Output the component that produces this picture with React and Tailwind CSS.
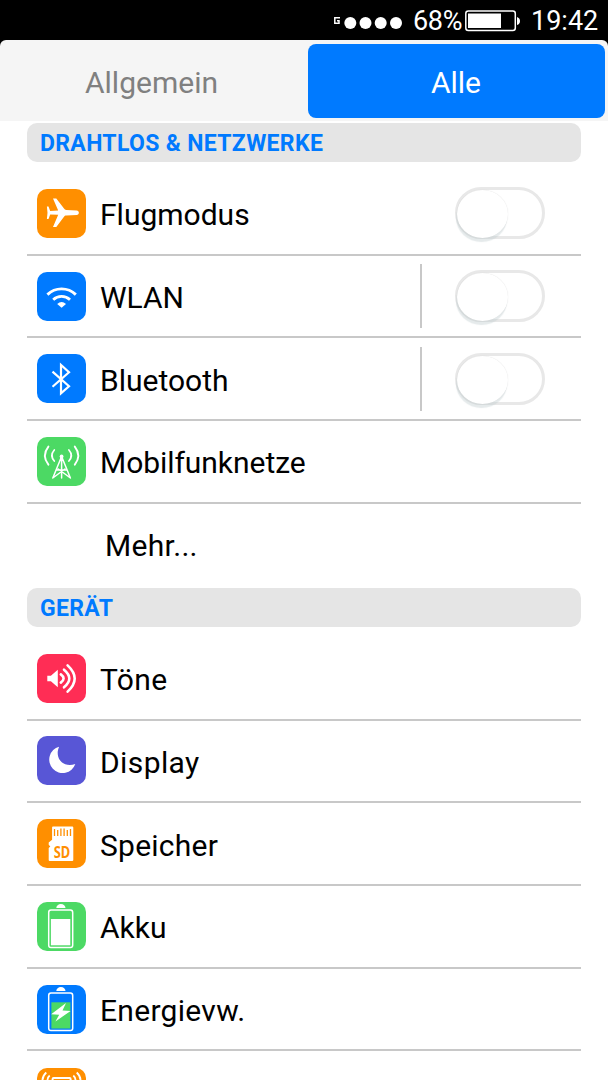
import React from "react";

function Tile({ color, children }) {
  return (
    <svg className={`size-[49px] shrink-0 rounded-[10px] ${color}`} viewBox="0 0 49 49" fill="none">
      {children}
    </svg>
  );
}

const Plane = () => (
  <Tile color="bg-[#ff8f00]">
    <path fill="#fff" d="M39.600 21.400c3 .4 3 4.200 0 4.600l-10.300.5c-1.200 0-1.700.5-2.300 1.300l-7.700 10.200h-3.300l5.200-12.200-8-.4-1.700 4.600H9.900l.6-6.300-.6-6.300h1.600l1.700 4.600 8-.4L16 9.400h3.300L27 19.600c.6.800 1.100 1.300 2.300 1.300z" />
  </Tile>
);

const Wifi = () => (
  <Tile color="bg-[#007aff]">
    <path stroke="#fff" strokeWidth="2.9" d="M10.4 22.6a20.500 20.500 0 0 1 28.400 0M16.200 27.700a12.400 12.400 0 0 1 16.800 0" />
    <path fill="#fff" d="M20.200 31.900q4.400-3.800 8.800 0l-4.400 3.800z" />
  </Tile>
);

const Bluetooth = () => (
  <Tile color="bg-[#007aff]">
    <path stroke="#fff" strokeWidth="2.2" d="M15.500 17.700 32 32.200 24 39.400V10.900l8 7.300L15.500 32.800" />
  </Tile>
);

const Tower = () => (
  <Tile color="bg-[#4cd964]">
    <g stroke="#fff" strokeLinecap="round">
      <path strokeWidth="1.9" d="M11.400 9.600q-7 9 0 18.100M37.800 9.600q7 9 0 18.100" />
      <path strokeWidth="1.7" d="M17.300 13q-4.800 5.500 0 11M31.900 13q4.800 5.500 0 11" />
      <path strokeWidth="1.5" d="M24.600 19.500 15.800 41M24.600 19.500 33.400 41M24.600 19.500V41M20 33h9.200M15.800 41l12.100-9M33.400 41l-12.100-9" />
    </g>
    <circle cx="24.600" cy="19.500" r="1.900" fill="#fff" />
  </Tile>
);

const Sound = () => (
  <Tile color="bg-[#ff2d55]">
    <path fill="#fff" d="M10.300 21.700h3.600l6.900-5.900v17.400l-6.900-5.900h-3.600z" />
    <path stroke="#fff" strokeWidth="2.6" strokeLinecap="round" d="M23.800 20.400q5.600 4.100 0 8.200M27 15.700q10.600 8.800 0 17.600M30.600 11.400q14.200 13.200 0 26.200" />
  </Tile>
);

const Moon = () => (
  <Tile color="bg-[#5856d6]">
    <path fill="#fff" d="M22.100 10.700a13.400 13.400 0 1 0 16.200 17.300c-12.200 4.200-21.200-6-16.200-17.300z" />
  </Tile>
);

const SdCard = () => (
  <Tile color="bg-[#ff8f00]">
    <path fill="#fff" d="M16 7.400h19.200q1.100 0 1.100 1.100v32.400q0 1.100-1.100 1.100H12.800q-1.100 0-1.100-1.100V29l1.600-1.500-1.600-1.700v-2.300l3.400-2.800V8.300q0-.9.900-.9z" />
    <path stroke="#ff8f00" strokeWidth="1.3" d="M17.500 10v7M20.700 11v6M23.900 9.500V17M27.100 9.500V17M30.300 11v6M33.500 10v7" />
    <text x="24.900" y="39" textAnchor="middle" fill="#ff8f00" className="font-['Noto_Sans',sans-serif] text-[15.5px] font-bold" textLength="16.500" lengthAdjust="spacingAndGlyphs">SD</text>
  </Tile>
);

const BatteryShell = () => (
  <>
    <rect x="11.700" y="8.100" width="24" height="37.400" rx="2.300" stroke="#fff" strokeWidth="1.500" />
    <path fill="#fff" d="M19.300 6c0-1.800 2-3.900 4.600-3.900S28.500 4.200 28.500 6z" />
  </>
);

const Battery = () => (
  <Tile color="bg-[#4cd964]">
    <BatteryShell />
    <rect x="13.900" y="17" width="19.400" height="26.300" fill="#fff" />
  </Tile>
);

const Power = () => (
  <Tile color="bg-[#007aff]">
    <BatteryShell />
    <rect x="14.400" y="17.300" width="19" height="26.200" fill="#4cd964" />
    <path fill="#fff" d="M29 18.100 14.200 29.200l8 .6-3.800 6.600 15.200-10.300-8.100-.5z" />
  </Tile>
);

const Phone = () => (
  <Tile color="bg-[#ff8f00]">
    <rect x="15.600" y="10" width="18" height="34" rx="1" stroke="#fff" strokeWidth="2" />
    <path stroke="#fff" strokeWidth="1.8" d="M9.300 4.500Q4 9 6 17M12.700 7.500q-3 2.500-2 7M39.700 4.500Q45 9 43 17M36.300 7.500q3 2.500 2 7" />
  </Tile>
);

function Toggle() {
  return (
    <span className="mr-9 h-[52px] w-[90px] rounded-full border-[3px] border-[#e8e8e8]">
      <span className="-ml-px block h-[48px] w-[51px] rounded-[50%] bg-white shadow-[-1px_4px_1px_0px_rgba(190,203,206,0.4),0_0_1px_rgba(0,0,0,0.15)]" />
    </span>
  );
}

function Row({ icon, label, toggle, split, tracking = "" }) {
  return (
    <li className="flex h-[82.7px] items-center border-b-2 border-[#c8c8c8] pl-2.5 last:border-0">
      {icon}
      <span className={`${icon ? "ml-3.5 pt-1" : "ml-[68px] pt-px"} ${tracking} grow whitespace-nowrap text-[30px] leading-9 text-black`}>{label}</span>
      {split && <span className="mr-[33px] h-16 w-0.5 bg-[#c8c8c8]" />}
      {toggle && <Toggle />}
    </li>
  );
}

function Section({ title, children }) {
  return (
    <section>
      <h2 className="mb-[11px] flex h-[39px] items-center rounded-[10px] bg-[#e5e5e5] pl-[13px] pt-[3px] text-[23px] font-bold tracking-[0.33px] text-[#007aff]">{title}</h2>
      <ul>{children}</ul>
    </section>
  );
}

export default function App() {
  return (
    <div className="h-[1080px] w-[608px] overflow-hidden bg-white font-[Roboto,sans-serif]">
      <div className="bg-black">
        <div className="flex h-10 items-center justify-end pr-2.5 pt-[3px] text-[27px] text-white">
          <svg className="h-10 w-[72px]" viewBox="0 0 72 40" fill="#fff">
            <path fill="none" stroke="#fff" strokeWidth="1.5" d="M7 15.700H1.800v5.600H6v-2.500H4" />
            <circle cx="17.300" cy="21" r="6" /><circle cx="32.500" cy="21" r="6" /><circle cx="47.700" cy="21" r="6" /><circle cx="63" cy="21" r="6" />
          </svg>
          <span className="ml-2 w-[50px] whitespace-nowrap tracking-[-0.3px]">68%</span>
          <svg className="-mt-px ml-0.5 h-[22px] w-14" viewBox="0 0 56 22" fill="none">
            <rect x="0.800" y="1" width="49.500" height="19.500" rx="2.500" stroke="#fff" strokeWidth="1.5" />
            <path fill="#fff" d="M3 3.500h33v14.500H3zM52 7q3 1 3 4t-3 4z" />
          </svg>
          <span className="ml-2.5 w-[67px] whitespace-nowrap">19:42</span>
        </div>
        <div className="grid h-[81px] grid-cols-[305px_297px] gap-[3px] rounded-t-md bg-[#f5f5f5] pt-1 text-[30px]">
          <div className="flex h-[74px] items-center justify-center pr-0.5 pt-0.5 text-[#808080]">Allgemein</div>
          <div className="flex h-[74px] items-center justify-center rounded-lg bg-[#007aff] pr-px pt-0.5 text-white">Alle</div>
        </div>
      </div>
      <main className="flex flex-col gap-[1.5px] px-[27px] pt-0.5">
        <Section title="DRAHTLOS & NETZWERKE">
          <Row icon={<Plane />} label="Flugmodus" toggle />
          <Row icon={<Wifi />} label="WLAN" toggle split />
          <Row icon={<Bluetooth />} label="Bluetooth" toggle split />
          <Row icon={<Tower />} label="Mobilfunknetze" tracking="tracking-[-0.05px]" />
          <Row label="Mehr..." tracking="tracking-[0.3px]" />
        </Section>
        <Section title="GERÄT">
          <Row icon={<Sound />} label="Töne" tracking="tracking-[0.4px]" />
          <Row icon={<Moon />} label="Display" tracking="tracking-[0.4px]" />
          <Row icon={<SdCard />} label="Speicher" tracking="tracking-[0.25px]" />
          <Row icon={<Battery />} label="Akku" />
          <Row icon={<Power />} label="Energievw." tracking="tracking-[0.3px]" />
          <Row icon={<Phone />} label="" />
        </Section>
      </main>
    </div>
  );
}
